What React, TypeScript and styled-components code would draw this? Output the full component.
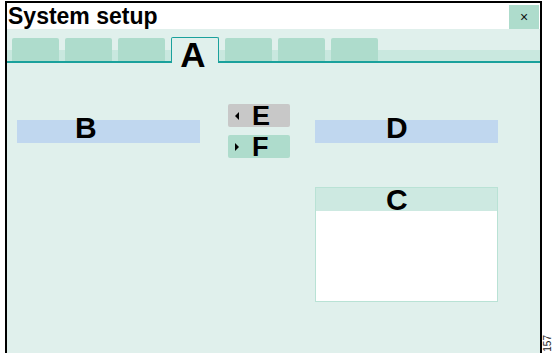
import React from "react"
import styled, { createGlobalStyle } from "styled-components"

const GlobalStyle = createGlobalStyle`
    html, body {
        margin: 0;
        padding: 0;
        background: #ffffff;
        font-family: "Liberation Sans", Arial, sans-serif;
    }
`

const MINT = "#e0f0ec"
const TAB = "#aedccc"
const BAND = "#c9e8df"
const TEAL = "#1aa19c"

const Page = styled.div`
    display: flex;
    width: 553px;
    height: 353px;
    overflow: hidden;
`

const Frame = styled.div`
    box-sizing: border-box;
    width: 537px;
    height: 352px;
    margin: 1px 0 0 5px;
    border: 2px solid #000000;
    border-bottom: none;
    display: flex;
    flex-direction: column;
    background: ${MINT};
`

const TitleBar = styled.div`
    height: 26px;
    display: flex;
    justify-content: space-between;
    align-items: flex-start;
    background: #ffffff;
`

const Title = styled.h1`
    margin: 0;
    padding-left: 1px;
    font-size: 23px;
    line-height: 26px;
    font-weight: bold;
    color: #000000;
`

const CloseButton = styled.div`
    width: 30px;
    height: 24px;
    margin: 2px 1px 0 0;
    background: ${TAB};
    display: flex;
    align-items: center;
    justify-content: center;
    font-size: 14px;
    color: #111111;
`

const TabStrip = styled.div`
    height: 32px;
    padding-left: 5px;
    display: flex;
    align-items: flex-end;
    gap: 6px;
    background: linear-gradient(to bottom, ${MINT} 0, ${MINT} 21px, ${BAND} 21px, ${BAND} 100%);
    border-bottom: 2px solid ${TEAL};
`

const Tab = styled.div<{ $active?: boolean }>`
    box-sizing: border-box;
    width: ${p => (p.$active ? 48 : 47)}px;
    height: ${p => (p.$active ? 26 : 23)}px;
    margin-bottom: ${p => (p.$active ? -2 : 0)}px;
    border-radius: 2px 2px 0 0;
    background: ${p => (p.$active ? MINT : TAB)};
    border: ${p => (p.$active ? `1px solid ${TEAL}` : "none")};
    border-bottom: none;
    display: flex;
    justify-content: center;
    overflow: visible;
`

const Letter = styled.span<{ $size: number; $lh: number; $dx?: number; $dy?: number }>`
    display: inline-block;
    font-size: ${p => p.$size}px;
    line-height: ${p => p.$lh}px;
    font-weight: bold;
    color: #000000;
    transform: translate(${p => p.$dx ?? 0}px, ${p => p.$dy ?? 0}px);
`

const Body = styled.div`
    flex: 1;
    padding: 41px 0 0 10px;
    display: grid;
    grid-template-columns: 183px 28px 62px 25px 183px;
    row-gap: 29px;
    align-items: center;
    align-content: start;
`

const Field = styled.div<{ $col: number }>`
    grid-column: ${p => p.$col};
    height: 23px;
    background: #c0d7ef;
    display: flex;
`

const FieldLabel = styled.div<{ $indent: number }>`
    padding-left: ${p => p.$indent}px;
`

const ButtonStack = styled.div`
    grid-column: 3;
    display: flex;
    flex-direction: column;
    gap: 8px;
`

const MoveButton = styled.div<{ $tone: "gray" | "green" }>`
    height: 23px;
    padding-left: 7px;
    border-radius: 2px;
    background: ${p => (p.$tone === "gray" ? "#c8c8c8" : TAB)};
    display: flex;
    align-items: center;
    gap: 13px;
`

const ListBox = styled.div`
    grid-column: 5;
    box-sizing: border-box;
    height: 115px;
    border: 1px solid #b9e2d5;
    display: flex;
    flex-direction: column;
    background: #ffffff;
`

const ListHeader = styled.div`
    height: 23px;
    padding-left: 70px;
    background: #cde9e1;
`

const Side = styled.div`
    flex: 1;
    display: flex;
    align-items: flex-end;
    justify-content: center;
    padding-bottom: 1px;
`

const Stamp = styled.span`
    writing-mode: vertical-rl;
    transform: rotate(180deg);
    font-size: 10px;
    line-height: 10px;
    color: #222222;
`

const Arrow = ({ dir }: { dir: "left" | "right" }) => (
    <svg width="4" height="8" viewBox="0 0 4 8">
        {dir === "left" ? <polygon points="4,0 4,8 0,4" fill="#000" /> : <polygon points="0,0 0,8 4,4" fill="#000" />}
    </svg>
)

const tabs = [false, false, false, true, false, false, false]

const App: React.FC = () =>
{
    return (
        <Page>
            <GlobalStyle />
            <Frame>
                <TitleBar>
                    <Title>System setup</Title>
                    <CloseButton>×</CloseButton>
                </TitleBar>
                <TabStrip>
                    {tabs.map((active, i) => (
                        <Tab key={i} $active={active}>
                            {active && <Letter $size={35} $lh={25} $dx={-2} $dy={4}>A</Letter>}
                        </Tab>
                    ))}
                </TabStrip>
                <Body>
                    <Field $col={1}>
                        <FieldLabel $indent={58}><Letter $size={30} $lh={23} $dy={-4}>B</Letter></FieldLabel>
                    </Field>
                    <ButtonStack>
                        <MoveButton $tone="gray"><Arrow dir="left" /><Letter $size={27} $lh={23} $dy={1}>E</Letter></MoveButton>
                        <MoveButton $tone="green"><Arrow dir="right" /><Letter $size={27} $lh={23} $dy={1}>F</Letter></MoveButton>
                    </ButtonStack>
                    <Field $col={5}>
                        <FieldLabel $indent={71}><Letter $size={30} $lh={23} $dy={-4}>D</Letter></FieldLabel>
                    </Field>
                    <ListBox>
                        <ListHeader><Letter $size={30} $lh={23}>C</Letter></ListHeader>
                    </ListBox>
                </Body>
            </Frame>
            <Side>
                <Stamp>157</Stamp>
            </Side>
        </Page>
    )
}

export default App
